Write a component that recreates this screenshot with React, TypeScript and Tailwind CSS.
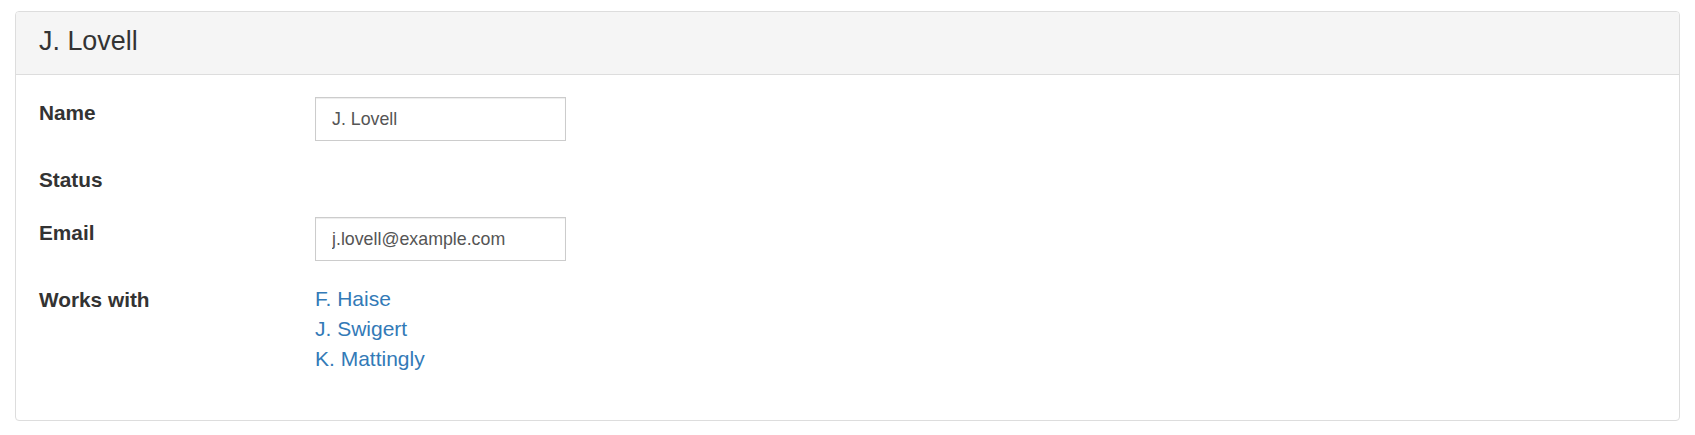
import React from 'react';

const font = "font-['Liberation_Sans',Arial,sans-serif]";

function Row({ label, children }: { label: string; children: React.ReactNode }) {
  return (
    <div className="flex mb-[23px]">
      <div className="w-[276px] shrink-0 pt-[1px] text-[20.8px] leading-[29px] font-bold text-[#333]">{label}</div>
      <div className="flex-1">{children}</div>
    </div>
  );
}

function TextBox({ value }: { value: string }) {
  return (
    <input
      readOnly
      defaultValue={value}
      className="block w-[251px] h-[44px] border border-[#ccc] bg-white px-[16px] text-[17.8px] text-[#555] outline-none shadow-[inset_0_1px_1px_rgba(0,0,0,0.075)]"
    />
  );
}

export default function App() {
  const colleagues = ['F. Haise', 'J. Swigert', 'K. Mattingly'];
  return (
    <div className={`${font} bg-white min-h-[435px] pt-[11px] px-[15px]`}>
      <div className="border border-[#ddd] rounded-[4px] bg-white overflow-hidden">
        <div className="bg-[#f5f5f5] border-b border-[#ddd] px-[23px] pt-[15px] pb-[18px]">
          <h3 className="text-[26.9px] leading-[29px] text-[#333] font-normal">J. Lovell</h3>
        </div>
        <div className="px-[23px] pt-[22px] pb-[23px]">
          <Row label="Name">
            <TextBox value="J. Lovell" />
          </Row>
          <Row label="Status">
            <div />
          </Row>
          <Row label="Email">
            <TextBox value="j.lovell@example.com" />
          </Row>
          <Row label="Works with">
            <div className="flex flex-col">
              {colleagues.map((c) => (
                <a key={c} href="#" className="text-[21px] leading-[30px] text-[#337ab7] w-fit">
                  {c}
                </a>
              ))}
            </div>
          </Row>
        </div>
      </div>
    </div>
  );
}
